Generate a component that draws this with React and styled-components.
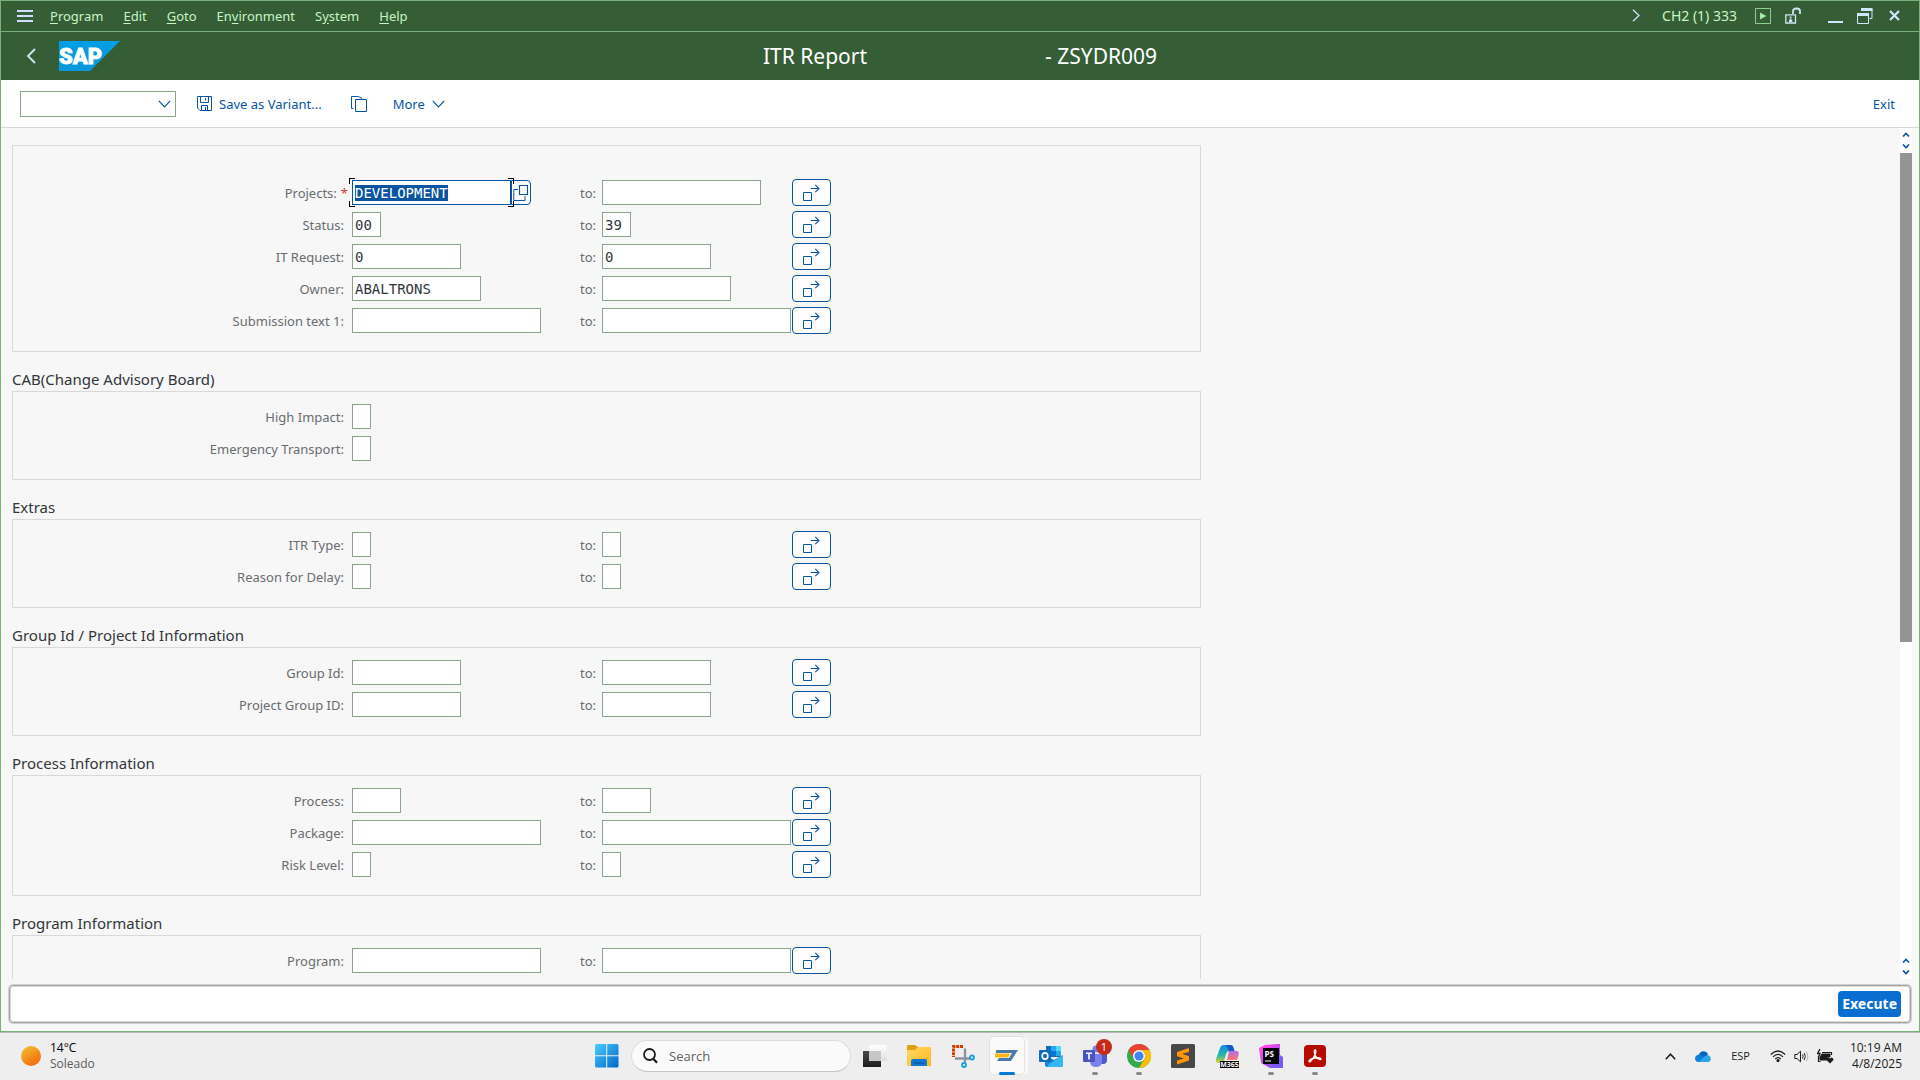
import React, { useEffect, useRef } from 'react';
import styled, { createGlobalStyle, css } from 'styled-components';

const Global = createGlobalStyle`
  *, *::before, *::after { box-sizing: border-box; }
  body { margin: 0; background: #f7f7f7; font-family: "Noto Sans", "Open Sans", sans-serif; font-size: 13px; }
  button, input, select { font: inherit; margin: 0; }
`;

const Screen = styled.div`
  height: 100vh;
  display: flex;
  flex-direction: column;
`;

const Window = styled.main`
  flex: 1;
  min-height: 0;
  display: flex;
  flex-direction: column;
  border: 1px solid #78b27a;
  background: #f7f7f7;
`;

/* ---------- menu and title bars ---------- */

const MenuBar = styled.nav`
  display: flex;
  justify-content: space-between;
  align-items: center;
  height: 31px;
  flex: none;
  padding: 0 16px 1px;
  background: #355e36;
  border-bottom: 1px solid #78b27a;
  color: #c9f5c4;
`;

const Cluster = styled.div`
  display: flex;
  align-items: center;
  gap: ${(p) => p.$gap}px;
`;

const PlainButton = styled.button`
  display: flex;
  align-items: center;
  gap: 7px;
  padding: 0;
  border: 0;
  background: none;
  color: inherit;
  line-height: 18px;
  white-space: nowrap;
`;

const Key = styled.span`
  text-decoration: underline;
  text-underline-offset: 2px;
`;

const Session = styled.span`
  font-size: 14px;
  line-height: 18px;
`;

const TitleBar = styled.header`
  display: grid;
  grid-template-columns: 1fr auto 1fr;
  align-items: center;
  height: 48px;
  flex: none;
  padding: 0 25px;
  background: #355e36;
  color: #fff;
`;

const Title = styled.h1`
  display: flex;
  gap: 178px;
  margin: 0;
  font-size: 21px;
  font-weight: 400;
  line-height: 28px;
`;

/* ---------- toolbar ---------- */

const Toolbar = styled.div`
  display: flex;
  justify-content: space-between;
  align-items: center;
  height: 48px;
  flex: none;
  padding: 0 24px 0 19px;
  background: #fff;
  border-bottom: 1px solid #d9d9d9;
  color: #0854a0;
`;

const SelectWrap = styled.div`
  display: grid;
  align-items: center;
  margin-right: 21px;
  & > * { grid-area: 1 / 1; }
  & > svg { justify-self: end; margin-right: 5px; pointer-events: none; }
`;

const CommandSelect = styled.select`
  appearance: none;
  width: 156px;
  height: 26px;
  border: 1px solid #89a58b;
  border-radius: 0;
  background: #fff;
`;

/* ---------- form ---------- */

const Body = styled.div`
  flex: 1;
  min-height: 0;
  display: flex;
  padding-right: 7px;
`;

const Form = styled.form`
  flex: 1;
  min-width: 0;
  padding: 17px 0 0 11px;
  overflow: hidden;
`;

const Group = styled.fieldset`
  display: block;
  max-width: 1189px;
  min-width: 0;
  margin: 0;
  padding: 0;
  border: 0;
`;

const GroupTitle = styled.legend`
  display: block;
  width: 100%;
  height: 39px;
  padding: 16px 0 0;
  font-size: 15px;
  line-height: 22px;
  color: #32363a;
`;

const Panel = styled.div`
  padding: ${(p) => (p.$first ? 31 : 9)}px 0 14px;
  border: 1px solid #d9d9d9;
`;

const Row = styled.div`
  display: grid;
  grid-template-columns: 339px 223px 27px 190px 39px;
  grid-template-rows: 27px;
  align-items: center;
  padding: 2px 0 3px;
`;

const Label = styled.label`
  justify-self: end;
  padding-right: ${(p) => p.$pad}px;
  line-height: 18px;
  color: #6a6d70;
  white-space: nowrap;
`;

const Star = styled.span`
  margin: 0 -4px 0 4px;
  color: #d33;
`;

const focused = css`
  border-color: #0854a0;
  &::selection { background: #0854a0; color: #fff; }
`;

const Field = styled.input`
  width: ${(p) => p.$w}px;
  height: 25px;
  padding: 0 2px;
  border: 1px solid #89a58b;
  border-radius: 0;
  outline: 0;
  background: #fff;
  color: #32363a;
  font-family: "DejaVu Sans Mono", "Liberation Mono", monospace;
  font-size: 14px;
  ${(p) => p.$focus && focused}
`;

const FocusWrap = styled.div`
  position: relative;
  display: flex;
  justify-self: start;
`;

const Bracket = styled.span`
  position: absolute;
  top: -2px;
  bottom: -2px;
  width: 6px;
  pointer-events: none;
  ${(p) => (p.$side === 'left' ? 'left: -3px;' : 'left: 156px;')}
  &::before, &::after {
    content: "";
    position: absolute;
    left: 0;
    width: 6px;
    height: 6px;
    border: 0 solid #000;
    border-${(p) => p.$side}-width: 1px;
  }
  &::before { top: 0; border-top-width: 1px; }
  &::after { bottom: 0; border-bottom-width: 1px; }
`;

const HelpButton = styled.button`
  display: flex;
  align-items: center;
  justify-content: center;
  width: 20px;
  height: 25px;
  padding: 0;
  border: 1px solid #0854a0;
  border-radius: 0 4px 4px 0;
  background: #fff;
  color: #0854a0;
`;

const RangeButton = styled.button`
  display: flex;
  align-items: center;
  justify-content: center;
  width: 39px;
  height: 27px;
  padding: 0;
  border: 1px solid #0854a0;
  border-radius: 4px;
  background: #fff;
  color: #0854a0;
`;

/* ---------- scroll bar and footer ---------- */

const ScrollTrack = styled.div`
  display: flex;
  flex-direction: column;
  width: 12px;
  background: #fff;
  color: #0854a0;
`;

const Arrows = styled.div`
  display: flex;
  flex-direction: column;
  align-items: center;
  justify-content: center;
  gap: 7px;
  height: 25px;
  flex: none;
`;

const ThumbLane = styled.div`
  flex: 1;
`;

const Thumb = styled.div`
  height: 61%;
  background: #949494;
`;

const Footer = styled.footer`
  flex: none;
  padding: 6px 8px 8px;
`;

const FooterBar = styled.div`
  display: flex;
  justify-content: flex-end;
  align-items: center;
  height: 38px;
  padding: 0 9px;
  border: 1px solid #a4a4a4;
  border-radius: 4px;
  background: #fff;
  box-shadow: 0 0 0 1px #d0d0d0, inset 0 0 0 1px #dadada;
`;

const ExecuteButton = styled.button`
  height: 26px;
  padding: 0 4px;
  border: 0;
  border-radius: 4px;
  background: #0a6ed1;
  color: #fff;
  font-size: 14px;
  font-weight: 700;
  line-height: 18px;
`;

/* ---------- taskbar ---------- */

const Taskbar = styled.footer`
  display: grid;
  grid-template-columns: 1fr auto 1fr;
  align-items: center;
  height: 48px;
  flex: none;
  padding: 0 18px 0 20px;
  border-top: 1px solid #b9b9b9;
  background: #eee;
  color: #1b1b1b;
  font-family: "Open Sans", "Noto Sans", sans-serif;
  font-size: 12px;
`;

const Weather = styled.button`
  display: flex;
  align-items: center;
  gap: 8px;
  justify-self: start;
  padding: 0 0 1px;
  border: 0;
  background: none;
  text-align: left;
`;

const Lines = styled.span`
  display: flex;
  flex-direction: column;
  align-items: ${(p) => p.$align};
  line-height: 16px;
`;

const Muted = styled.span`
  color: #5d5d5d;
`;

const Apps = styled.div`
  display: flex;
  align-items: center;
`;

const AppButton = styled.button`
  position: relative;
  display: flex;
  align-items: center;
  justify-content: center;
  width: 44px;
  height: 47px;
  padding: 0 0 2px;
  border: 0;
  background: none;
  &::after {
    content: "";
    position: absolute;
    bottom: 5px;
    width: ${(p) => (p.$state === 'active' ? 16 : 6)}px;
    height: 3px;
    border-radius: 2px;
    background: ${(p) => (p.$state === 'active' ? '#0078d4' : p.$state === 'open' ? '#8a8a8a' : 'transparent')};
  }
`;

const ActiveTile = styled.span`
  display: flex;
  align-items: center;
  justify-content: center;
  width: 34px;
  height: 37px;
  border-radius: 4px;
  background: #fafafa;
  box-shadow: 0 0 0 1px #e2e2e2, 4px 0 0 0 #f8f8f8;
`;

const Badge = styled.span`
  position: absolute;
  top: 6px;
  right: 5px;
  width: 16px;
  height: 16px;
  border-radius: 8px;
  background: #c42b1c;
  color: #fff;
  font-size: 11px;
  line-height: 16px;
  text-align: center;
`;

const SearchBox = styled.label`
  display: flex;
  align-items: center;
  gap: 11px;
  width: 220px;
  height: 32px;
  margin: 0 2px 1px;
  padding: 0 11px;
  border: 1px solid #dcdcdc;
  border-bottom-color: #c4c4c4;
  border-radius: 16px;
  background: #fafafa;
`;

const SearchInput = styled.input`
  flex: 1;
  min-width: 0;
  padding: 0;
  border: 0;
  outline: 0;
  background: none;
  font-size: 13px;
  line-height: 20px;
  &::placeholder { color: #5f5f5f; opacity: 1; }
`;

const Tray = styled.div`
  display: flex;
  align-items: center;
  justify-self: end;
  padding-bottom: 1px;
`;

const TrayItem = styled.button`
  display: flex;
  align-items: center;
  gap: 8px;
  margin-right: ${(p) => p.$after}px;
  padding: 0;
  border: 0;
  background: none;
  color: inherit;
  font-size: 11px;
  line-height: 16px;
`;

/* ---------- drawings ---------- */

const Line = ({ w, h, d, sw = 1, children, ...rest }) => (
  <svg width={w} height={h} viewBox={`0 0 ${w} ${h}`} fill="none" stroke="currentColor" strokeWidth={sw} aria-hidden="true" {...rest}>
    {d && <path d={d} />}
    {children}
  </svg>
);

const Chevron = () => <Line w={13} h={8} d="M.8 .8 6.5 6.8 12.2 .8" sw={1.2} />;

const SapLogo = () => (
  <svg width="61" height="30" viewBox="0 0 61 30" role="img" aria-label="SAP">
    <defs>
      <linearGradient id="sap" x1="0" y1="0" x2="0" y2="1">
        <stop offset="0" stopColor="#009fe3" />
        <stop offset="1" stopColor="#0a98dc" />
      </linearGradient>
    </defs>
    <path d="M0 0H61L31 30H0Z" fill="url(#sap)" />
    <text x="0" y="23" fill="#fff" stroke="#fff" strokeWidth=".8" fontFamily="Roboto, sans-serif" fontWeight="900" fontSize="22">SAP</text>
  </svg>
);

const RangeIcon = () => (
  <Line w={17} h={18}>
    <path d="M.5 8.5H8.5V16.5H.5Z" />
    <path d="M8 4.5H16M12.300 .8 16 4.500 12.300 8.200" strokeWidth="1.100" />
  </Line>
);

const WindowsLogo = () => (
  <svg width="24" height="24" viewBox="0 0 24 24" aria-hidden="true">
    <defs>
      <linearGradient id="win" x1="0" y1="0" x2="1" y2="1">
        <stop offset="0" stopColor="#49cdfd" />
        <stop offset="1" stopColor="#0067c8" />
      </linearGradient>
    </defs>
    <path d="M1.500 0H11.200V11.200H0V1.500Q0 0 1.500 0ZM12.200 0H22Q23.500 0 23.500 1.500V11.200H12.200ZM0 12.200H11.200V23.500H1.500Q0 23.500 0 22ZM12.200 12.200H23.500V22Q23.500 23.500 22 23.500H12.200Z" fill="url(#win)" />
  </svg>
);

const TaskViewIcon = () => (
  <svg width="24" height="24" viewBox="0 0 24 24" aria-hidden="true">
    <defs>
      <linearGradient id="tv" x1="0" y1="0" x2="0" y2="1"><stop offset="0" stopColor="#4a4a4a" /><stop offset="1" stopColor="#1c1c1c" /></linearGradient>
      <linearGradient id="tw" x1="0" y1="0" x2="0" y2="1"><stop offset="0" stopColor="#fff" /><stop offset="1" stopColor="#dedede" /></linearGradient>
    </defs>
    <rect x="0" y="7" width="18" height="16" fill="url(#tv)" />
    <rect x="6" y="1" width="18" height="16" rx="1" fill="url(#tw)" />
    <rect x="6" y="7" width="12" height="10" fill="#c6c6c6" />
  </svg>
);

const FolderIcon = () => (
  <svg width="24" height="24" viewBox="0 0 24 24" aria-hidden="true">
    <defs>
      <linearGradient id="fo" x1="0" y1="0" x2="1" y2="1"><stop offset="0" stopColor="#ffd965" /><stop offset="1" stopColor="#ffb81c" /></linearGradient>
    </defs>
    <path d="M0 2Q0 1 1 1H8L11 3V8H0Z" fill="#e0a010" />
    <path d="M0 6H8L11 3H23Q24 3 24 4V22H0Z" fill="url(#fo)" />
    <path d="M4 22V17Q4 15 6 15H18Q20 15 20 17V22Z" fill="#0f78d0" />
    <path d="M7 19H17" stroke="#0a5ba8" strokeWidth="1.500" />
  </svg>
);

const SnipIcon = () => (
  <svg width="24" height="24" viewBox="0 0 24 24" fill="none" aria-hidden="true">
    <path d="M12 2.500H2.500V13" stroke="#d83b01" strokeWidth="3" strokeDasharray="3 .8" />
    <path d="M14 4.500V18.500M4 14.500H19" stroke="#8a9299" strokeWidth="2.300" />
    <circle cx="13" cy="21" r="2" stroke="#1a9fe0" strokeWidth="1.800" />
    <circle cx="21" cy="13.500" r="2" stroke="#1a9fe0" strokeWidth="1.800" />
  </svg>
);

const SapGuiIcon = () => (
  <svg width="24" height="14" viewBox="0 0 24 14" aria-hidden="true">
    <path d="M1 1H23L16 12H2L4 9H14L17 4H1Z" fill="#4a7ba8" />
    <path d="M0 4.500H15.500L13 8.500H0Z" fill="#fdb515" />
  </svg>
);

const OutlookIcon = () => (
  <svg width="24" height="22" viewBox="0 0 24 22" aria-hidden="true">
    <path d="M7 1H22V12H7Z" fill="#0f6cbd" />
    <path d="M12 1H17V6H12Z" fill="#28a8ea" />
    <path d="M17 1H22V6H17Z" fill="#50d9ff" />
    <path d="M12 6H17V11H12Z" fill="#0078d4" />
    <path d="M17 6H22V11H17Z" fill="#28a8ea" />
    <path d="M6 10 15 15 24 10V20Q24 22 22 22H8Q6 22 6 20Z" fill="#1683d8" />
    <path d="M24 10 10 19 8 22H22Q24 22 24 20Z" fill="#35b8f1" />
    <rect x="0" y="5" width="12" height="12" rx="1" fill="#0f6cbd" />
    <ellipse cx="6" cy="11" rx="2.800" ry="3.100" fill="none" stroke="#fff" strokeWidth="1.600" />
  </svg>
);

const TeamsIcon = () => (
  <svg width="24" height="22" viewBox="0 0 24 22" aria-hidden="true">
    <circle cx="20" cy="6" r="2.500" fill="#5059c9" />
    <path d="M16 9H24V15Q24 19 20 19H16Z" fill="#5059c9" />
    <circle cx="13" cy="4" r="3.500" fill="#7b83eb" />
    <path d="M7 9H19V16Q19 22 13 22Q7 22 7 16Z" fill="#7b83eb" />
    <rect x="0" y="5" width="12" height="12" rx="1" fill="#4b53bc" />
    <path d="M3 8.300H9M6 8.300V14.500" stroke="#fff" strokeWidth="1.600" />
  </svg>
);

const ChromeIcon = () => (
  <svg width="24" height="24" viewBox="0 0 24 24" aria-hidden="true">
    <circle cx="12" cy="12" r="12" fill="#34a853" />
    <path d="M1.600 6A12 12 0 0 1 22.400 6H12A6 6 0 0 0 6.800 15Z" fill="#ea4335" />
    <path d="M22.400 6A12 12 0 0 1 12 24L17.200 15A6 6 0 0 0 12 6Z" fill="#fbbc04" />
    <circle cx="12" cy="12" r="6" fill="#fff" />
    <circle cx="12" cy="12" r="4.600" fill="#4285f4" />
  </svg>
);

const SublimeIcon = () => (
  <svg width="24" height="24" viewBox="0 0 24 24" aria-hidden="true">
    <rect width="24" height="24" rx="1.500" fill="#474747" />
    <path d="M18 4 6 8V12.200L13 14.500 6 16.500V20.500L18 16.500V12.200L11 9.800 18 8Z" fill="#ff9800" />
  </svg>
);

const M365Icon = () => (
  <svg width="24" height="24" viewBox="0 0 24 24" aria-hidden="true">
    <defs>
      <linearGradient id="ma" x1="0" y1="0" x2="0" y2="1"><stop offset="0" stopColor="#1289e8" /><stop offset=".6" stopColor="#2bb9a0" /><stop offset="1" stopColor="#f0d020" /></linearGradient>
      <linearGradient id="mb" x1="0" y1="0" x2="0" y2="1"><stop offset="0" stopColor="#b46be8" /><stop offset="1" stopColor="#fb7a6c" /></linearGradient>
    </defs>
    <path d="M5 4Q6 1 9 1H15Q18 1 18.500 4L19.500 7H15Q12 7 11 10L9 17Q8 19 5 19H3Q0 19 1 15Z" fill="url(#ma)" />
    <path d="M14 7H21Q24.500 7 23.500 11L22 16H12Z" fill="url(#mb)" />
    <path d="M11 1H15Q18 1 18.500 4L19.500 7H14Z" fill="#1757c8" />
    <rect x="5" y="17" width="19" height="7" fill="#000" />
    <text x="14.500" y="23" textAnchor="middle" fill="#fff" fontFamily="Open Sans, sans-serif" fontWeight="700" fontSize="7">M365</text>
  </svg>
);

const PhpStormIcon = () => (
  <svg width="24" height="24" viewBox="0 0 24 24" aria-hidden="true">
    <defs>
      <linearGradient id="ps" x1="0" y1="0" x2="1" y2="1"><stop offset=".2" stopColor="#ff45ed" /><stop offset=".8" stopColor="#765af8" /></linearGradient>
    </defs>
    <path d="M0 4 6 1 19 0 21 0V11L24 13V24H11L2 19Z" fill="url(#ps)" />
    <rect x="4" y="4" width="16" height="16" fill="#000" />
    <text x="5.500" y="13" fill="#fff" fontFamily="Open Sans, sans-serif" fontWeight="700" fontSize="8">PS</text>
    <path d="M6 17H12" stroke="#fff" />
  </svg>
);

const AcrobatIcon = () => (
  <svg width="22" height="22" viewBox="0 0 22 22" aria-hidden="true">
    <rect width="22" height="22" rx="4" fill="#b30b00" />
    <path d="M11 5Q12.500 5 11.500 8.500Q10 13 6.500 16.500Q5 17.500 5 16Q6 14 11 13Q16.500 12.200 17 14Q16.500 15.500 13.500 13.500Q10.500 11 10.200 7Q10.200 5 11 5Z" fill="none" stroke="#fff" strokeWidth="1.300" />
  </svg>
);

const SunIcon = () => (
  <svg width="22" height="22" viewBox="0 0 22 22" aria-hidden="true">
    <defs>
      <linearGradient id="sun" x1=".2" y1="0" x2=".8" y2="1"><stop offset="0" stopColor="#f2bd2e" /><stop offset="1" stopColor="#f2640c" /></linearGradient>
    </defs>
    <circle cx="11" cy="11" r="10" fill="url(#sun)" />
  </svg>
);

/* ---------- data ---------- */

const MENUS = [['', 'E', 'dit'], ['', 'G', 'oto'], ['En', 'v', 'ironment'], ['S', 'y', 'stem'], ['', 'H', 'elp']];

const GROUPS = [
  {
    rows: [
      { label: 'Projects:', w: 159, from: 'DEVELOPMENT', to: '', required: true },
      { label: 'Status:', w: 29, from: '00', to: '39' },
      { label: 'IT Request:', w: 109, from: '0', to: '0' },
      { label: 'Owner:', w: 129, from: 'ABALTRONS', to: '' },
      { label: 'Submission text 1:', w: 189, from: '', to: '' },
    ],
  },
  {
    title: 'CAB(Change Advisory Board)',
    rows: [
      { label: 'High Impact:', w: 19, from: '' },
      { label: 'Emergency Transport:', w: 19, from: '' },
    ],
  },
  {
    title: 'Extras',
    rows: [
      { label: 'ITR Type:', w: 19, from: '', to: '' },
      { label: 'Reason for Delay:', w: 19, from: '', to: '' },
    ],
  },
  {
    title: 'Group Id / Project Id Information',
    rows: [
      { label: 'Group Id:', w: 109, from: '', to: '' },
      { label: 'Project Group ID:', w: 109, from: '', to: '' },
    ],
  },
  {
    title: 'Process Information',
    rows: [
      { label: 'Process:', w: 49, from: '', to: '' },
      { label: 'Package:', w: 189, from: '', to: '' },
      { label: 'Risk Level:', w: 19, from: '', to: '' },
    ],
  },
  {
    title: 'Program Information',
    rows: [{ label: 'Program:', w: 189, from: '', to: '' }],
  },
];

const APPS = [
  { name: 'Task view', icon: <TaskViewIcon /> },
  { name: 'File Explorer', icon: <FolderIcon /> },
  { name: 'Snipping Tool', icon: <SnipIcon /> },
  { name: 'SAP Logon', icon: <ActiveTile><SapGuiIcon /></ActiveTile>, state: 'active' },
  { name: 'Outlook', icon: <OutlookIcon /> },
  { name: 'Teams', icon: <TeamsIcon />, state: 'open', badge: '1' },
  { name: 'Chrome', icon: <ChromeIcon />, state: 'open' },
  { name: 'Sublime Text', icon: <SublimeIcon /> },
  { name: 'Microsoft 365', icon: <M365Icon /> },
  { name: 'PhpStorm', icon: <PhpStormIcon />, state: 'open' },
  { name: 'Acrobat', icon: <AcrobatIcon />, state: 'open' },
];

/* ---------- parts ---------- */

function FocusedField({ id, row }) {
  const ref = useRef(null);
  useEffect(() => {
    ref.current.focus();
    ref.current.select();
  }, []);
  return (
    <FocusWrap>
      <Field ref={ref} id={id} $w={row.w} $focus defaultValue={row.from} required />
      <HelpButton type="button" aria-label="Value help">
        <Line w={16} h={17}>
          <path d="M6.500 1.500H14.500V10.500H6.500Z" strokeWidth="1.200" />
          <path d="M5 5.500H.8V16.500H12V12" />
        </Line>
      </HelpButton>
      <Bracket $side="left" />
      <Bracket $side="right" />
    </FocusWrap>
  );
}

function FieldRow({ row, id }) {
  return (
    <Row>
      <Label htmlFor={id} $pad={8}>
        {row.label}
        {row.required && <Star>*</Star>}
      </Label>
      {row.required ? <FocusedField id={id} row={row} /> : <Field id={id} $w={row.w} defaultValue={row.from} />}
      {row.to !== undefined && (
        <>
          <Label htmlFor={`${id}-to`} $pad={6}>to:</Label>
          <Field id={`${id}-to`} $w={row.w} defaultValue={row.to} />
          <RangeButton type="button" aria-label={`Multiple selection ${row.label}`}><RangeIcon /></RangeButton>
        </>
      )}
    </Row>
  );
}

const ScrollArrows = () => (
  <Arrows>
    <Line w={8} h={5} d="M1 4.500 4 1.500 7 4.500" sw={1.6} />
    <Line w={8} h={5} d="M1 .5 4 3.500 7 .5" sw={1.6} />
  </Arrows>
);

export default function App() {
  return (
    <Screen>
      <Global />
      <Window>
        <MenuBar>
          <Cluster $gap={20}>
            <Cluster $gap={17}>
              <PlainButton aria-label="Menu"><Line w={16} h={12} d="M0 1H16M0 6H16M0 11H16" sw={2} color="#cfe0ff" /></PlainButton>
              <PlainButton><span><Key>P</Key>rogram</span></PlainButton>
            </Cluster>
            {MENUS.map(([a, k, b]) => (
              <PlainButton key={b}><span>{a}<Key>{k}</Key>{b}</span></PlainButton>
            ))}
          </Cluster>
          <Cluster $gap={18}>
            <Cluster $gap={22}>
              <PlainButton aria-label="Expand"><Line w={8} h={13} d="M1 .8 7 6.500 1 12.200" sw={1.3} color="#cfe0ff" /></PlainButton>
              <Session>CH2 (1) 333</Session>
            </Cluster>
            <Cluster $gap={14}>
              <PlainButton aria-label="Run">
                <Line w={16} h={16} color="#8fce90"><path d="M.5 .5H15.500V15.500H.5Z" /><path d="M5 4.500 11.500 8 5 11.500Z" fill="#a8e6a4" stroke="none" /></Line>
              </PlainButton>
              <PlainButton aria-label="Unlocked">
                <Line w={16} h={17} color="#cfe6f5">
                  <path d="M.8 7.800H10.500V16H.8Z" strokeWidth="1.300" />
                  <path d="M8 7V4Q8 1.500 11.500 1.500Q15 1.500 15 4V7" strokeWidth="1.800" />
                  <path d="M5.600 9.500V11.500M4 14H7.300M5.600 12V14" strokeWidth="1.800" />
                </Line>
              </PlainButton>
              <PlainButton aria-label="Minimize"><Line w={28} h={16} d="M13 14H28" sw={2} color="#cfe6ff" /></PlainButton>
              <PlainButton aria-label="Restore">
                <Line w={16} h={16} color="#cfe6ff"><path d="M.5 5V15.500H11.500V5M15 1V10.500H12.500" /><path d="M0 6.500H12M4 1.500H15.500" strokeWidth="3" /></Line>
              </PlainButton>
              <PlainButton aria-label="Close"><Line w={16} h={11} d="M3 1 12 10M12 1 3 10" sw={2.2} color="#cfe6ff" /></PlainButton>
            </Cluster>
          </Cluster>
        </MenuBar>

        <TitleBar>
          <Cluster $gap={23}>
            <PlainButton aria-label="Back"><Line w={10} h={16} d="M9 1 2 8 9 15" sw={1.8} color="#cfe6f5" /></PlainButton>
            <SapLogo />
          </Cluster>
          <Title><span>ITR Report</span><span>- ZSYDR009</span></Title>
        </TitleBar>

        <Toolbar>
          <Cluster $gap={29}>
            <Cluster $gap={0}>
              <SelectWrap>
                <CommandSelect aria-label="Command" />
                <Chevron />
              </SelectWrap>
              <PlainButton>
                <Line w={15} h={15}>
                  <path d="M.5 .5H14.500V14.500H3L.5 12Z" />
                  <path d="M3.500 .5V6.500H11.500V.5M4.500 14V9.500H10.500V14M8.500 11V14M8.500 2V4.500" />
                </Line>
                Save as Variant...
              </PlainButton>
            </Cluster>
            <Cluster $gap={26}>
              <PlainButton aria-label="Get variant">
                <Line w={16} h={16}><path d="M4.500 3.500H10L10 3.500H15.500V15.500H4.500Z" /><path d="M2.500 12.500H.5V.5H7.500L11 2.500V3.500" /></Line>
              </PlainButton>
              <PlainButton>More <Chevron /></PlainButton>
            </Cluster>
          </Cluster>
          <PlainButton>Exit</PlainButton>
        </Toolbar>

        <Body>
          <Form>
            {GROUPS.map((group, g) => (
              <Group key={group.title || 'main'}>
                {group.title && <GroupTitle>{group.title}</GroupTitle>}
                <Panel $first={!group.title}>
                  {group.rows.map((row, r) => <FieldRow key={row.label} row={row} id={`f${g}-${r}`} />)}
                </Panel>
              </Group>
            ))}
          </Form>
          <ScrollTrack>
            <ScrollArrows />
            <ThumbLane><Thumb /></ThumbLane>
            <ScrollArrows />
          </ScrollTrack>
        </Body>

        <Footer>
          <FooterBar><ExecuteButton>Execute</ExecuteButton></FooterBar>
        </Footer>
      </Window>

      <Taskbar>
        <Weather>
          <SunIcon />
          <Lines $align="flex-start"><span>14°C</span><Muted>Soleado</Muted></Lines>
        </Weather>
        <Apps>
          <AppButton aria-label="Start"><WindowsLogo /></AppButton>
          <SearchBox>
            <Line w={15} h={16} sw={1.8}><circle cx="6.500" cy="6.500" r="5.500" /><path d="M10.500 11 14 14.800" strokeWidth="2.200" /></Line>
            <SearchInput placeholder="Search" aria-label="Search" />
          </SearchBox>
          {APPS.map((app) => (
            <AppButton key={app.name} aria-label={app.name} $state={app.state}>
              {app.icon}
              {app.badge && <Badge>{app.badge}</Badge>}
            </AppButton>
          ))}
        </Apps>
        <Tray>
          <TrayItem $after={19} aria-label="Hidden icons"><Line w={11} h={7} d="M.8 6.200 5.500 1.200 10.200 6.200" sw={1.5} /></TrayItem>
          <TrayItem $after={20} aria-label="OneDrive">
            <svg width="16" height="11" viewBox="0 0 16 11" aria-hidden="true">
              <path d="M4 3.500Q5.500 0 9 .3Q12.500 .8 13 4L8 8 2 9Z" fill="#0a62bd" />
              <path d="M4 3.500Q7 3.200 9 6L5 11H3.500Q0 10.500 0 7.200Q.5 4 4 3.500Z" fill="#0f7fdb" />
              <path d="M4 11 9.500 5.500Q12.500 3.200 15 5.500Q17 9 14 11Z" fill="#28a8ea" />
            </svg>
          </TrayItem>
          <TrayItem $after={20}>ESP</TrayItem>
          <TrayItem $after={16} aria-label="Network, volume and battery">
            <Line w={16} h={12} sw={1.2}>
              <path d="M.8 4.500Q8 -2.500 15.200 4.500M3 6.800Q8 1.800 13 6.800M5.200 9Q8 6.200 10.800 9" />
              <circle cx="8" cy="10.500" r="1" fill="currentColor" />
            </Line>
            <Line w={15} h={13}>
              <path d="M.8 4.500H3L6.500 1.200V11.800L3 8.500H.8Z" />
              <path d="M8.500 4.500Q9.800 6.500 8.500 8.500M10.200 3Q12.500 6.500 10.200 10" />
              <path d="M12.200 1.500Q15.500 6.500 12.200 11.500" stroke="#b5b5b5" />
            </Line>
            <Line w={17} h={15}>
              <path d="M5 3.500H14.500V6M3.500 12.500H1.500V7" strokeWidth="1.200" />
              <path d="M5 5H13V8H10V11H3V8Z" fill="currentColor" />
              <path d="M3 0 .5 4.500H3L1.500 8" strokeWidth="1.300" />
              <path d="M13 14.500 9.500 11Q9.500 8.500 11.500 8.500L13 9.500 14.500 8.500Q16.500 8.500 16.500 11Z" fill="currentColor" stroke="none" />
            </Line>
          </TrayItem>
          <Lines $align="flex-end"><span>10:19 AM</span><span>4/8/2025</span></Lines>
        </Tray>
      </Taskbar>
    </Screen>
  );
}
